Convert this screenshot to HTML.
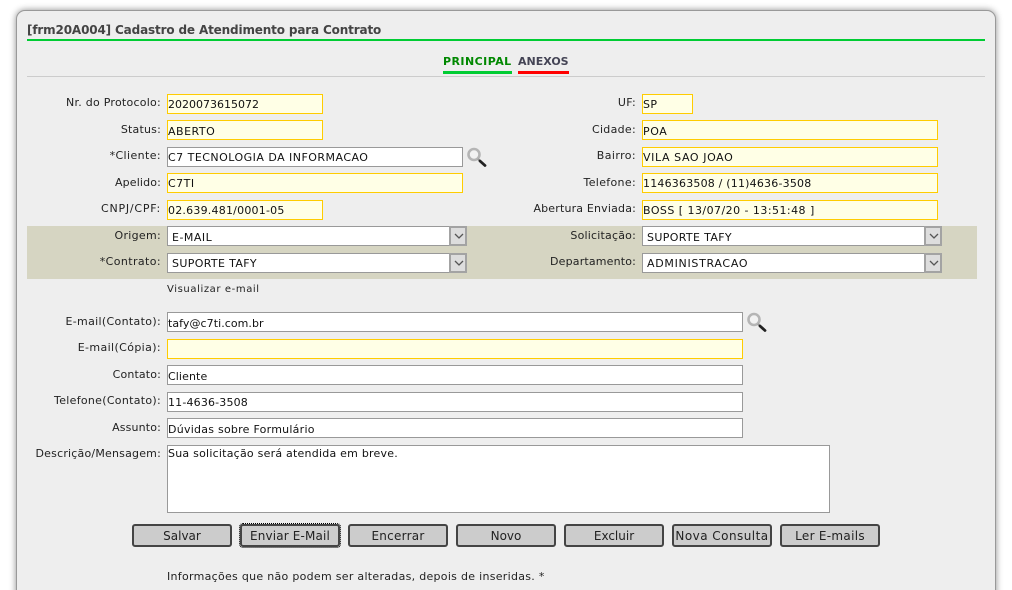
<!DOCTYPE html>
<html><head><meta charset="utf-8"><style>
html,body{margin:0;padding:0;width:1012px;height:590px;overflow:hidden;background:#fff;font-family:"DejaVu Sans","Liberation Sans",sans-serif;font-size:11px;color:#111}
#w{position:relative;width:1012px;height:590px;overflow:hidden}
#p{position:absolute;left:16px;top:10px;width:978px;height:600px;background:#eee;border:1px solid #999;border-radius:9px;box-shadow:0 0 7px rgba(0,0,0,.45)}
.a{position:absolute;white-space:nowrap}
.l{position:absolute;white-space:nowrap;text-align:right;height:14px;line-height:14px;color:#222;letter-spacing:.2px}
.f{position:absolute;box-sizing:border-box;height:20px;line-height:18px;padding:1px 0 0 0;border:1px solid #999;background:#fff;white-space:nowrap;overflow:hidden;color:#111}
.d{padding-top:2px}
.y{border-color:#fc0;background:#ffffe6}
.s{position:absolute;box-sizing:border-box;height:20px;line-height:18px;padding-left:4px;padding-top:2px;border:1px solid #999;background:#fff;white-space:nowrap}
.s i{position:absolute;right:-1px;top:-1px;width:18px;height:20px;box-sizing:border-box;border:2px solid #a3a3a3;background:#ddd}
.s svg{position:absolute;left:3px;top:5px}
.b{position:absolute;top:524px;width:100px;height:23px;box-sizing:border-box;border:2px solid #444;border-radius:3px;background:#ccc;text-align:center;line-height:20px;font-size:12px;color:#222;white-space:nowrap}
</style></head><body><div id="w">
<div id="p"></div>
<div class="a" style="left:27px;top:23px;font-weight:bold;font-size:12px;line-height:15px;color:#444;letter-spacing:-.15px">[frm20A004] Cadastro de Atendimento para Contrato</div>
<div class="a" style="left:27px;top:39px;width:958px;height:2px;background:#0c3"></div>
<div class="a" style="left:443px;top:55px;font-weight:bold;font-size:11px;line-height:14px;color:#080;letter-spacing:.45px">PRINCIPAL</div>
<div class="a" style="left:443px;top:71px;width:69px;height:3px;background:#0c3"></div>
<div class="a" style="left:518px;top:55px;font-weight:bold;font-size:11px;line-height:14px;color:#445">ANEXOS</div>
<div class="a" style="left:518px;top:71px;width:51px;height:3px;background:#f00"></div>
<div class="a" style="left:27px;top:76px;width:958px;height:1px;background:#ccc"></div>
<div class="a" style="left:27px;top:226px;width:950px;height:53px;background:#d6d5c2"></div>

<div class="l" style="right:851px;top:96px;letter-spacing:.25px">Nr. do Protocolo:</div>
<div class="f y" style="left:167px;top:94px;width:156px">2020073615072</div>
<div class="l" style="right:851px;top:123px">Status:</div>
<div class="f y d" style="left:167px;top:120px;width:156px;letter-spacing:.5px">ABERTO</div>
<div class="l" style="right:851px;top:149px;letter-spacing:.4px">*Cliente:</div>
<div class="f" style="left:167px;top:147px;width:296px;letter-spacing:.48px">C7 TECNOLOGIA DA INFORMACAO</div>
<svg class="a" style="left:466px;top:147px" width="21" height="20" viewBox="0 0 21 20"><circle cx="8" cy="7.5" r="5.5" fill="#f2f2f2" stroke="#b5b5b5" stroke-width="2.6"/><path d="M12 12l2 2" stroke="#999" stroke-width="2"/><path d="M14 14l5 4.5" stroke="#222" stroke-width="2.8" stroke-linecap="round"/></svg>
<div class="l" style="right:851px;top:176px;letter-spacing:.15px">Apelido:</div>
<div class="f y" style="left:167px;top:173px;width:296px;letter-spacing:.5px">C7TI</div>
<div class="l" style="right:851px;top:202px;letter-spacing:.78px">CNPJ/CPF:</div>
<div class="f y" style="left:167px;top:200px;width:156px;letter-spacing:.22px">02.639.481/0001-05</div>

<div class="l" style="right:376px;top:96px;letter-spacing:.3px">UF:</div>
<div class="f y" style="left:642px;top:94px;width:51px;letter-spacing:.4px">SP</div>
<div class="l" style="right:376px;top:123px;letter-spacing:.3px">Cidade:</div>
<div class="f y d" style="left:642px;top:120px;width:296px;letter-spacing:.6px">POA</div>
<div class="l" style="right:376px;top:149px;letter-spacing:.4px">Bairro:</div>
<div class="f y" style="left:642px;top:147px;width:296px;letter-spacing:.6px">VILA SAO JOAO</div>
<div class="l" style="right:376px;top:176px;letter-spacing:.33px">Telefone:</div>
<div class="f y" style="left:642px;top:173px;width:296px;letter-spacing:.2px">1146363508 / (11)4636-3508</div>
<div class="l" style="right:376px;top:202px;letter-spacing:.18px">Abertura Enviada:</div>
<div class="f y" style="left:642px;top:200px;width:296px;letter-spacing:.46px">BOSS [ 13/07/20 - 13:51:48 ]</div>

<div class="l" style="right:851px;top:229px;letter-spacing:.3px">Origem:</div>
<div class="s" style="left:167px;top:226px;width:300px;letter-spacing:.5px">E-MAIL<i><svg width="10" height="7"><path d="M1 1l4 4 4-4" fill="none" stroke="#555" stroke-width="1.3"/></svg></i></div>
<div class="l" style="right:851px;top:255px;letter-spacing:.4px">*Contrato:</div>
<div class="s" style="left:167px;top:253px;width:300px;padding-top:1px;letter-spacing:.35px">SUPORTE TAFY<i><svg width="10" height="7"><path d="M1 1l4 4 4-4" fill="none" stroke="#555" stroke-width="1.3"/></svg></i></div>
<div class="l" style="right:376px;top:229px">Solicitação:</div>
<div class="s" style="left:642px;top:226px;width:300px;letter-spacing:.35px">SUPORTE TAFY<i><svg width="10" height="7"><path d="M1 1l4 4 4-4" fill="none" stroke="#555" stroke-width="1.3"/></svg></i></div>
<div class="l" style="right:376px;top:255px;letter-spacing:.17px">Departamento:</div>
<div class="s" style="left:642px;top:253px;width:300px;padding-top:1px;letter-spacing:.7px">ADMINISTRACAO<i><svg width="10" height="7"><path d="M1 1l4 4 4-4" fill="none" stroke="#555" stroke-width="1.3"/></svg></i></div>

<div class="a" style="left:167px;top:283px;font-size:10px;line-height:14px;color:#222;letter-spacing:.6px">Visualizar e-mail</div>

<div class="l" style="right:851px;top:315px;letter-spacing:.33px">E-mail(Contato):</div>
<div class="f d" style="left:167px;top:312px;width:576px;letter-spacing:.06px">tafy@c7ti.com.br</div>
<svg class="a" style="left:746px;top:312px" width="21" height="20" viewBox="0 0 21 20"><circle cx="8" cy="7.5" r="5.5" fill="#f2f2f2" stroke="#b5b5b5" stroke-width="2.6"/><path d="M12 12l2 2" stroke="#999" stroke-width="2"/><path d="M14 14l5 4.5" stroke="#222" stroke-width="2.8" stroke-linecap="round"/></svg>
<div class="l" style="right:851px;top:341px;letter-spacing:.38px">E-mail(Cópia):</div>
<div class="f y" style="left:167px;top:339px;width:576px"></div>
<div class="l" style="right:851px;top:368px;letter-spacing:.15px">Contato:</div>
<div class="f d" style="left:167px;top:365px;width:576px;letter-spacing:.1px">Cliente</div>
<div class="l" style="right:851px;top:394px;letter-spacing:.3px">Telefone(Contato):</div>
<div class="f" style="left:167px;top:392px;width:576px;letter-spacing:.17px">11-4636-3508</div>
<div class="l" style="right:851px;top:421px;letter-spacing:.15px">Assunto:</div>
<div class="f d" style="left:167px;top:418px;width:576px;letter-spacing:.25px">Dúvidas sobre Formulário</div>
<div class="l" style="right:851px;top:447px">Descrição/Mensagem:</div>
<div class="f" style="left:167px;top:445px;width:663px;height:68px;line-height:14px;padding-top:1px;letter-spacing:.23px">Sua solicitação será atendida em breve.</div>

<div class="b" style="left:132px">Salvar</div>
<div class="b" style="left:240px;outline:1px dotted #000;outline-offset:0;letter-spacing:.15px">Enviar E-Mail</div>
<div class="b" style="left:348px;letter-spacing:.25px">Encerrar</div>
<div class="b" style="left:456px">Novo</div>
<div class="b" style="left:564px">Excluir</div>
<div class="b" style="left:672px;letter-spacing:.46px">Nova Consulta</div>
<div class="b" style="left:780px;letter-spacing:.3px">Ler E-mails</div>
<div class="a" style="left:167px;top:570px;line-height:14px;color:#222;letter-spacing:.29px">Informações que não podem ser alteradas, depois de inseridas. *</div>
</div></body></html>
